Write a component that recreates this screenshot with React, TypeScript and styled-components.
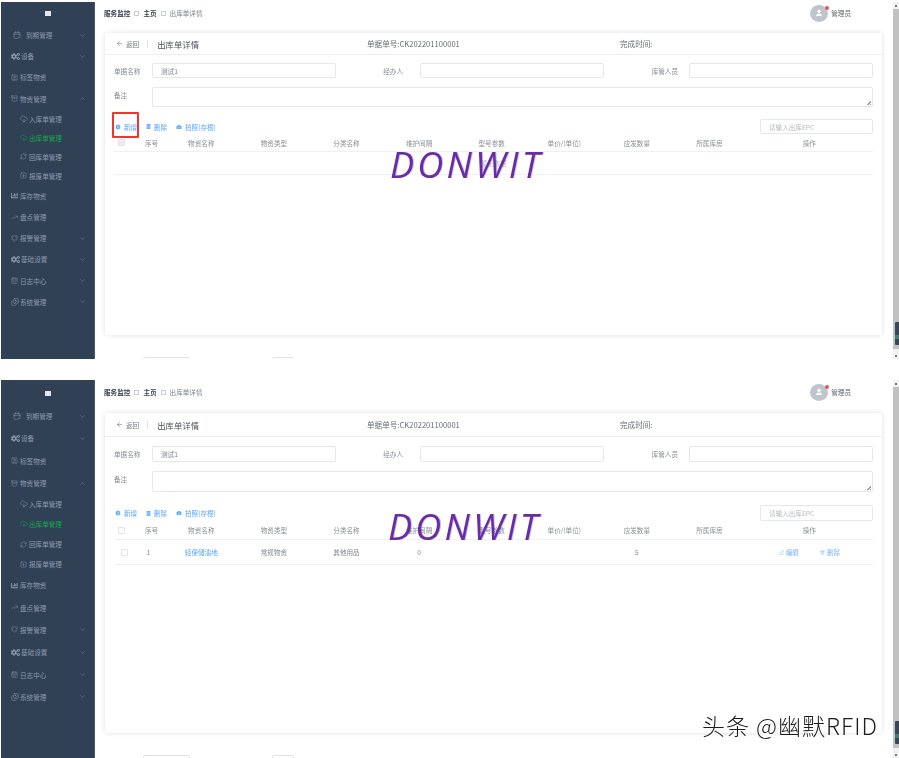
import * as React from 'react';
import styled, {createGlobalStyle, ThemeProvider} from 'styled-components';
import {
  Archive,
  ArrowLeft,
  BellRing,
  CalendarDays,
  CalendarMinus,
  Camera,
  ChevronDown,
  ChevronUp,
  CloudDownload,
  CloudUpload,
  Images,
  PenLine,
  PlusCircle,
  RefreshCw,
  SquareArrowDown,
  SquareUser,
  Trash2,
  TrendingUp,
  User,
} from 'lucide-react';
import {FaChartBar, FaCogs, FaTrashAlt} from 'react-icons/fa';

const FONT = '"Noto Sans CJK SC", "Liberation Sans", sans-serif';

interface Metrics {
  shotHeight: number;
  brand: number;
  menuRow: number;
  subRow: number;
  crumb: number;
  cardHeight: number;
  cardHead: number;
  formTop: number;
  field: number;
  formGap: number;
  note: number;
  toolGap: number;
  headRow: number;
  bodyRow: number;
}

const shortShot: Metrics = {
  shotHeight: 357,
  brand: 22.5,
  menuRow: 21.2,
  subRow: 19,
  crumb: 22,
  cardHeight: 302,
  cardHead: 22,
  formTop: 8,
  field: 15,
  formGap: 9,
  note: 20,
  toolGap: 12,
  headRow: 18,
  bodyRow: 23,
};

const tallShot: Metrics = {
  shotHeight: 378,
  brand: 25,
  menuRow: 22.3,
  subRow: 20,
  crumb: 24,
  cardHeight: 320,
  cardHead: 24,
  formTop: 9,
  field: 16,
  formGap: 9,
  note: 21,
  toolGap: 13,
  headRow: 19,
  bodyRow: 25,
};

const GlobalStyle = createGlobalStyle`
  html, body {
    margin: 0;
    padding: 0;
    background: #fff;
    overflow: hidden;
  }
  body {
    font-family: ${FONT};
    font-size: 6.6px;
    color: #606266;
  }
  *, *::before, *::after {
    box-sizing: border-box;
  }
`;

const Page = styled.div`
  position: relative;
  display: flex;
  flex-direction: column;
  gap: 21px;
  width: 899px;
  height: 758px;
  padding-top: 2px;
  overflow: hidden;
`;

const Shot = styled.section`
  position: relative;
  height: ${p => p.theme.shotHeight}px;
  overflow: hidden;
`;

const Frame = styled.div`
  display: flex;
  height: 100%;
  padding-left: 1px;
  filter: blur(0.55px);
`;

const Sidebar = styled.nav`
  flex: 0 0 94px;
  background: #304156;
  border-right: 1px solid #46586e;
`;

const Brand = styled.div`
  display: flex;
  align-items: center;
  justify-content: center;
  height: ${p => p.theme.brand}px;
  padding-top: 1px;
`;

const BrandMark = styled.span`
  width: 6px;
  height: 5px;
  background: #e4e7eb;
`;

const MenuRow = styled.div<{$sub?: boolean; $active?: boolean}>`
  display: flex;
  align-items: center;
  height: ${p => (p.$sub ? p.theme.subRow : p.theme.menuRow)}px;
  padding-left: ${p => (p.$sub ? 19 : 10)}px;
  padding-right: 8px;
  color: ${p => (p.$active ? '#17a34a' : '#8d9aab')};
  font-size: 6.6px;
  white-space: nowrap;
`;

const MenuIcon = styled.span<{$width: number}>`
  display: flex;
  align-items: center;
  flex: 0 0 ${p => p.$width}px;
`;

const MenuChevron = styled.span`
  display: flex;
  margin-left: auto;
  color: #6c7c90;
`;

const Main = styled.main`
  flex: 1;
  min-width: 0;
  display: flex;
  flex-direction: column;
  padding: 0 11px 0 10px;
`;

const TopBar = styled.header`
  display: flex;
  align-items: center;
  justify-content: space-between;
  flex: 0 0 auto;
  height: ${p => p.theme.crumb}px;
  margin-bottom: 9px;
  padding-right: 31px;
`;

const Crumbs = styled.div`
  display: flex;
  align-items: center;
  gap: 4px;
  margin-left: -1px;
`;

const Crumb = styled.span<{$strong?: boolean}>`
  color: ${p => (p.$strong ? '#3d4654' : '#7d838c')};
  font-weight: ${p => (p.$strong ? 700 : 400)};
`;

const CrumbMark = styled.span`
  width: 5px;
  height: 5px;
  border: 1px solid #c9cdd3;
`;

const UserBox = styled.div`
  display: flex;
  align-items: center;
  gap: 3px;
  color: #5f6670;
`;

const Avatar = styled.span`
  position: relative;
  display: flex;
  align-items: center;
  justify-content: center;
  width: 18px;
  height: 17px;
  border-radius: 50%;
  background: #c0c4cc;
  color: #fff;

  &::after {
    content: '';
    position: absolute;
    top: 1px;
    right: -1px;
    width: 4px;
    height: 4px;
    border-radius: 50%;
    background: #f0525a;
  }
`;

const Card = styled.div`
  display: flex;
  flex-direction: column;
  flex: 0 0 auto;
  height: ${p => p.theme.cardHeight}px;
  background: #fff;
  border-radius: 2px;
  box-shadow: 0 0 5px rgba(0, 0, 0, 0.13);
`;

const CardHead = styled.div`
  display: grid;
  grid-template-columns: 251px 253px 1fr;
  align-items: center;
  flex: 0 0 auto;
  height: ${p => p.theme.cardHead}px;
  padding-left: 11px;
  border-bottom: 1px solid #eceef2;
  font-size: 7.6px;
  color: #676c73;
`;

const BackGroup = styled.div`
  display: flex;
  align-items: center;
`;

const BackLink = styled.span`
  display: flex;
  align-items: center;
  gap: 3px;
  font-size: 6.6px;
  color: #737980;
`;

const HeadDivider = styled.span`
  width: 1px;
  height: 8px;
  margin: 0 9px 0 8px;
  background: #dfe2e6;
`;

const PageTitle = styled.span`
  font-size: 8.4px;
  color: #4c5158;
`;

const CardBody = styled.div`
  flex: 1;
  padding: ${p => p.theme.formTop}px 9px 0;
`;

const FormRow = styled.div`
  display: grid;
  grid-template-columns: 38px 184px 84px 184px 85px 184px;
  align-items: center;
`;

const NoteRow = styled.div`
  display: grid;
  grid-template-columns: 38px 1fr;
  align-items: start;
  margin-top: ${p => p.theme.formGap}px;
`;

const FieldLabel = styled.label<{$right?: number}>`
  color: #868b92;
  text-align: ${p => (p.$right ? 'right' : 'left')};
  padding-right: ${p => p.$right ?? 0}px;
`;

const NoteLabel = styled(FieldLabel)`
  padding-top: 3px;
`;

const TextField = styled.input`
  width: 100%;
  height: ${p => p.theme.field}px;
  padding: 0 8px;
  border: 1px solid #e4e7ed;
  border-radius: 2px;
  outline: none;
  background: #fff;
  font-family: ${FONT};
  font-size: 6.6px;
  color: #7b8088;

  &::placeholder {
    color: #b6bac2;
    opacity: 1;
  }
`;

const NoteBox = styled.div`
  position: relative;
  height: ${p => p.theme.note}px;
  border: 1px solid #e4e7ed;
  border-radius: 2px;

  &::after {
    content: '';
    position: absolute;
    right: 1px;
    bottom: 1px;
    width: 4px;
    height: 4px;
    background: linear-gradient(135deg, transparent 50%, #9a9ea5 50%, #9a9ea5 65%, transparent 65%, transparent 78%, #9a9ea5 78%);
  }
`;

const Toolbar = styled.div`
  display: flex;
  align-items: center;
  height: ${p => p.theme.field}px;
  margin-top: ${p => p.theme.toolGap}px;
  color: #5aa5fb;
`;

const ToolButton = styled.span<{$marked?: boolean; $width: number}>`
  position: relative;
  display: flex;
  align-items: center;
  gap: 3px;
  flex: 0 0 ${p => p.$width}px;
  padding-left: 1px;

  ${p =>
    p.$marked &&
    `&::after {
      content: '';
      position: absolute;
      left: -2px;
      top: -10px;
      width: 27px;
      height: 26px;
      border: 2px solid #f0362c;
      border-radius: 1px;
    }`}
`;

const SearchBox = styled.div`
  width: 113px;
  margin-left: auto;
`;

const SearchField = styled(TextField)`
  display: block;
`;

const GridRow = styled.div<{$head?: boolean}>`
  display: grid;
  grid-template-columns: 31px 20px repeat(8, 72.6px) 1fr;
  align-items: center;
  height: ${p => (p.$head ? p.theme.headRow : p.theme.bodyRow)}px;
  border-bottom: 1px solid #eef0f3;
  color: ${p => (p.$head ? '#8a8f96' : '#82878e')};
`;

const Cell = styled.span`
  text-align: center;
  white-space: nowrap;
`;

const IndexCell = styled.span`
  white-space: nowrap;
`;

const LinkCell = styled(Cell)`
  color: #5aa5fb;
`;

const CheckCell = styled.span<{$inset: number}>`
  display: flex;
  padding-left: ${p => p.$inset}px;
`;

const CheckBox = styled.span<{$disabled?: boolean}>`
  width: 7px;
  height: 7px;
  border: 1px solid #dfe3ea;
  border-radius: 1px;
  background: ${p => (p.$disabled ? '#e9edf4' : '#fff')};
`;

const ActionCell = styled.span`
  display: flex;
  justify-content: center;
  gap: 21px;
  color: #7fb6fb;
`;

const Action = styled.span`
  display: flex;
  align-items: center;
  gap: 2px;
`;

const EmptyRow = styled.div`
  display: flex;
  align-items: center;
  justify-content: center;
  height: ${p => p.theme.bodyRow}px;
  border-bottom: 1px solid #eef0f3;
  color: #b8bcc3;
`;

const Pager = styled.div`
  display: flex;
  gap: 82px;
  flex: 0 0 auto;
  margin: 22px 0 0 38px;
`;

const PagerBox = styled.span<{$width: number}>`
  width: ${p => p.$width}px;
  height: 12px;
  border: 1px solid #dfe2e6;
  border-radius: 2px;
`;

const ScrollBar = styled.aside`
  position: relative;
  display: flex;
  flex-direction: column;
  flex: 0 0 6px;
  background: #f1f1f1;
`;

const ScrollArrow = styled.span`
  flex: 0 0 7px;
  display: flex;
  align-items: center;
  justify-content: center;

  &::before {
    content: '';
    width: 2px;
    height: 2px;
    background: #777;
  }
`;

const ScrollThumb = styled.span`
  flex: 1;
  margin-bottom: 3px;
  background: #c1c1c1;
`;

const FloatWidget = styled.span`
  position: absolute;
  right: 0;
  bottom: 14px;
  width: 4px;
  height: 23px;
  border-radius: 1px 0 0 1px;
  background: linear-gradient(180deg, #3b4656 0 55%, #4f7a70 55% 75%, #3b4656 75%);
`;

const Watermark = styled.div<{$left: number; $top: number}>`
  position: absolute;
  left: ${p => p.$left}px;
  top: ${p => p.$top}px;
  font-family: "Open Sans", sans-serif;
  font-style: italic;
  font-size: 36px;
  line-height: 40px;
  letter-spacing: 3.2px;
  color: #6b2ca3;
  text-shadow: 1px 0 0 rgba(70, 70, 200, 0.35);
`;

const Signature = styled.div`
  position: absolute;
  left: 702px;
  top: 709px;
  font-family: ${FONT};
  font-size: 23px;
  line-height: 32px;
  letter-spacing: 1px;
  font-weight: 300;
  color: #1d1d1d;
  white-space: nowrap;
  text-shadow: 1px 1px 0 rgba(255, 255, 255, 0.8);
`;

type MenuItem = {
  label: string;
  icon: React.ReactNode;
  slot?: number;
  chevron?: 'up' | 'down';
  sub?: boolean;
  active?: boolean;
};

const menu: MenuItem[] = [
  {label: '到期管理', icon: <CalendarMinus size={8} strokeWidth={1.5} style={{marginLeft: 2}} />, slot: 15, chevron: 'down'},
  {label: '设备', icon: <FaCogs size={9} />, slot: 10, chevron: 'down'},
  {label: '标签物资', icon: <SquareUser size={7} strokeWidth={1.5} />},
  {label: '物资管理', icon: <Archive size={7} strokeWidth={1.5} />, chevron: 'up'},
  {label: '入库单管理', icon: <CloudDownload size={8} strokeWidth={1.5} />, sub: true},
  {label: '出库单管理', icon: <CloudUpload size={8} strokeWidth={1.5} />, sub: true, active: true},
  {label: '回库单管理', icon: <RefreshCw size={7} strokeWidth={1.5} />, sub: true},
  {label: '报废单管理', icon: <SquareArrowDown size={7} strokeWidth={1.5} />, sub: true},
  {label: '库存物资', icon: <FaChartBar size={7} />},
  {label: '盘点管理', icon: <TrendingUp size={7} strokeWidth={1.5} />},
  {label: '报警管理', icon: <BellRing size={7} strokeWidth={1.5} />, chevron: 'down'},
  {label: '基础设置', icon: <FaCogs size={9} />, slot: 10, chevron: 'down'},
  {label: '日志中心', icon: <CalendarDays size={7} strokeWidth={1.5} />, chevron: 'down'},
  {label: '系统管理', icon: <Images size={8} strokeWidth={1.5} />, chevron: 'down'},
];

const columns = ['物资名称', '物资类型', '分类名称', '维护间隔', '型号参数', '单价/(单位)', '应发数量', '所属库房'];

const SideMenu = () => (
  <Sidebar>
    <Brand>
      <BrandMark />
    </Brand>
    {menu.map(item => (
      <MenuRow key={item.label} $sub={item.sub} $active={item.active}>
        <MenuIcon $width={item.slot ?? 9}>{item.icon}</MenuIcon>
        {item.label}
        {item.chevron && (
          <MenuChevron>
            {item.chevron === 'up' ? <ChevronUp size={7} /> : <ChevronDown size={7} />}
          </MenuChevron>
        )}
      </MenuRow>
    ))}
  </Sidebar>
);

const DetailTable = ({filled}: {filled: boolean}) => (
  <div>
    <GridRow $head>
      <CheckCell $inset={4}>
        <CheckBox $disabled={!filled} />
      </CheckCell>
      <IndexCell>序号</IndexCell>
      {columns.map(name => (
        <Cell key={name}>{name}</Cell>
      ))}
      <Cell>操作</Cell>
    </GridRow>
    {filled ? (
      <GridRow>
        <CheckCell $inset={7}>
          <CheckBox />
        </CheckCell>
        <IndexCell>&nbsp;1</IndexCell>
        <LinkCell>轻便储油地</LinkCell>
        <Cell>常规物资</Cell>
        <Cell>其他用品</Cell>
        <Cell>0</Cell>
        <Cell />
        <Cell />
        <Cell>5</Cell>
        <Cell />
        <ActionCell>
          <Action>
            <PenLine size={5} />
            编辑
          </Action>
          <Action>
            <Trash2 size={5} />
            删除
          </Action>
        </ActionCell>
      </GridRow>
    ) : (
      <EmptyRow>暂无数据</EmptyRow>
    )}
  </div>
);

const OutboundDetail = ({filled}: {filled: boolean}) => (
  <Frame>
    <SideMenu />
    <Main>
      <TopBar>
        <Crumbs>
          <Crumb $strong>服务监控</Crumb>
          <CrumbMark />
          <Crumb $strong>主页</Crumb>
          <CrumbMark />
          <Crumb>出库单详情</Crumb>
        </Crumbs>
        <UserBox>
          <Avatar>
            <User size={8} fill="#fff" />
          </Avatar>
          管理员
        </UserBox>
      </TopBar>
      <Card>
        <CardHead>
          <BackGroup>
            <BackLink>
              <ArrowLeft size={7} />
              返回
            </BackLink>
            <HeadDivider />
            <PageTitle>出库单详情</PageTitle>
          </BackGroup>
          <span>单据单号:CK202201100001</span>
          <span>完成时间:</span>
        </CardHead>
        <CardBody>
          <FormRow>
            <FieldLabel>单据名称</FieldLabel>
            <TextField readOnly value="测试1" />
            <FieldLabel $right={17}>经办人</FieldLabel>
            <TextField readOnly />
            <FieldLabel $right={11}>库管人员</FieldLabel>
            <TextField readOnly />
          </FormRow>
          <NoteRow>
            <NoteLabel>备注</NoteLabel>
            <NoteBox />
          </NoteRow>
          <Toolbar>
            <ToolButton $width={31} $marked={!filled}>
              <PlusCircle size={6} fill="#409eff" stroke="#fff" />
              新增
            </ToolButton>
            <ToolButton $width={30}>
              <FaTrashAlt size={5} />
              删除
            </ToolButton>
            <ToolButton $width={50}>
              <Camera size={6} fill="#409eff" stroke="#dbeafe" />
              拍照(存根)
            </ToolButton>
            <SearchBox>
              <SearchField readOnly placeholder="请输入出库EPC" />
            </SearchBox>
          </Toolbar>
          <DetailTable filled={filled} />
        </CardBody>
      </Card>
      <Pager>
        <PagerBox $width={47} />
        <PagerBox $width={22} />
      </Pager>
    </Main>
    <ScrollBar>
      <ScrollArrow />
      <ScrollThumb />
      <ScrollArrow />
      <FloatWidget />
    </ScrollBar>
  </Frame>
);

export default function App() {
  return (
    <>
      <GlobalStyle />
      <Page>
        <ThemeProvider theme={shortShot}>
          <Shot>
            <OutboundDetail filled={false} />
            <Watermark $left={390} $top={143}>DONWIT</Watermark>
          </Shot>
        </ThemeProvider>
        <ThemeProvider theme={tallShot}>
          <Shot>
            <OutboundDetail filled />
            <Watermark $left={388} $top={127}>DONWIT</Watermark>
          </Shot>
        </ThemeProvider>
        <Signature>头条 @幽默RFID</Signature>
      </Page>
    </>
  );
}
